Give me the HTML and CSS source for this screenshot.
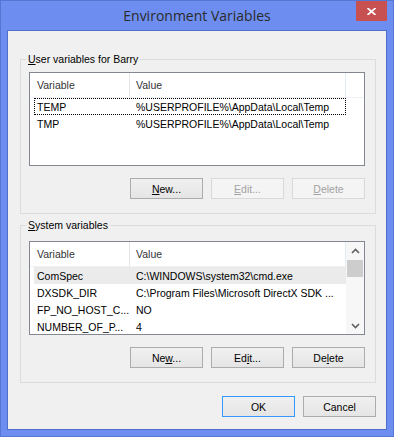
FILE: index.html
```html
<!DOCTYPE html>
<html lang="en">
<head>
    <meta charset="UTF-8">
    <title>Environment Variables</title>
    <link rel="stylesheet" href="styles.css">
</head>
<body>
    <div class="window">
        <div class="titlebar">
            <span></span>
            <span class="title">Environment Variables</span>
            <span class="close">
                <svg width="9" height="7" viewBox="0 0 9 7"><path d="M0.5 0 L8.5 7 M8.5 0 L0.5 7" stroke="#fff" stroke-width="1.7"/></svg>
            </span>
        </div>

        <div class="client">
            <fieldset class="group group-user">
                <legend><u>U</u>ser variables for Barry</legend>
                <div class="listview">
                    <div class="lv-main">
                        <div class="lv-header">
                            <span class="lv-col lv-col-name">Variable</span>
                            <span class="lv-col lv-col-value">Value</span>
                        </div>
                        <div class="lv-row lv-focus"><span>TEMP</span><span>%USERPROFILE%\AppData\Local\Temp</span></div>
                        <div class="lv-row"><span>TMP</span><span>%USERPROFILE%\AppData\Local\Temp</span></div>
                    </div>
                </div>
                <div class="buttons">
                    <button class="btn"><u>N</u>ew...</button>
                    <button class="btn" disabled><u>E</u>dit...</button>
                    <button class="btn" disabled><u>D</u>elete</button>
                </div>
            </fieldset>

            <fieldset class="group group-system">
                <legend><u>S</u>ystem variables</legend>
                <div class="listview">
                    <div class="lv-main lv-main-scroll">
                        <div class="lv-header">
                            <span class="lv-col lv-col-name">Variable</span>
                            <span class="lv-col lv-col-value">Value</span>
                        </div>
                        <div class="lv-row lv-hot"><span>ComSpec</span><span>C:\WINDOWS\system32\cmd.exe</span></div>
                        <div class="lv-row"><span>DXSDK_DIR</span><span>C:\Program Files\Microsoft DirectX SDK ...</span></div>
                        <div class="lv-row"><span>FP_NO_HOST_C...</span><span>NO</span></div>
                        <div class="lv-row"><span>NUMBER_OF_P...</span><span>4</span></div>
                    </div>
                    <div class="scrollbar">
                        <span class="sb-arrow">
                            <svg width="9" height="6" viewBox="0 0 9 6"><path d="M1 5 L4.5 1.5 L8 5" fill="none" stroke="#606060" stroke-width="1.6"/></svg>
                        </span>
                        <span class="sb-thumb"></span>
                        <span class="sb-track"></span>
                        <span class="sb-arrow">
                            <svg width="9" height="6" viewBox="0 0 9 6"><path d="M1 1 L4.5 4.5 L8 1" fill="none" stroke="#606060" stroke-width="1.6"/></svg>
                        </span>
                    </div>
                </div>
                <div class="buttons">
                    <button class="btn">Ne<u>w</u>...</button>
                    <button class="btn">Ed<u>i</u>t...</button>
                    <button class="btn">De<u>l</u>ete</button>
                </div>
            </fieldset>

            <div class="dialog-buttons">
                <button class="btn btn-default">OK</button>
                <button class="btn">Cancel</button>
            </div>
        </div>
    </div>
</body>
</html>
```

FILE: styles.css
```css
body {
    margin: 0;
    font-family: "Liberation Sans", Arial, sans-serif;
    font-size: 10.5px;
    color: #000;
}

.window {
    width: 394px;
    height: 437px;
    box-sizing: border-box;
    border: 1px solid #5676d3;
    background: #6d8ef0;
    padding: 0 6px 6px;
    display: flex;
    flex-direction: column;
}

.titlebar {
    height: 29px;
    display: grid;
    grid-template-columns: 1fr auto 1fr;
}

.title {
    font-family: "Open Sans", "Noto Sans", sans-serif;
    font-size: 14px;
    line-height: 30px;
    color: #2b2b2b;
}

.close {
    justify-self: end;
    width: 31px;
    height: 20px;
    background: #c75050;
    display: flex;
    align-items: center;
    justify-content: center;
}

.client {
    flex: 1;
    border: 1px solid #4f6fcb;
    background: #f0f0f0;
    display: flex;
    flex-direction: column;
}

/* group boxes */
.group {
    margin: 0 10px 0 12px;
    padding: 0 10px 14px 8px;
    border: 1px solid #dcdcdc;
    min-width: 0;
}

.group legend {
    margin-left: -3px;
    padding: 0 2px;
    line-height: 13px;
}

.group-user {
    margin-top: 22px;
    padding-top: 6px;
}

.group-system {
    margin-top: 5px;
    padding-top: 9px;
}

/* list view */
.listview {
    height: 94px;
    box-sizing: border-box;
    border: 1px solid #828790;
    background: #fff;
    display: flex;
}

.lv-main {
    flex: 1;
}

.lv-main-scroll {
    flex: none;
    width: 316px;
}

.lv-header {
    display: flex;
    height: 24px;
    line-height: 24px;
    color: #333;
    border-bottom: 1px solid #eef2f7;
}

.lv-col {
    box-sizing: border-box;
}

.lv-col-name {
    width: 100px;
    padding-left: 7px;
    border-right: 1px solid #e5e5e5;
}

.lv-col-value {
    width: 216px;
    padding-left: 6px;
    border-right: 1px solid #e3ebf5;
}

.lv-row {
    display: grid;
    grid-template-columns: 99px 1fr;
    margin-left: 4px;
    width: 312px;
    height: 17px;
    line-height: 17px;
    box-sizing: border-box;
    border: 1px dotted transparent;
    padding-left: 2px;
    white-space: nowrap;
}

.lv-focus {
    border-color: #000;
}

.lv-hot {
    background: #ebebeb;
}

/* scroll bar */
.scrollbar {
    width: 18px;
    background: #f7f7f7;
    display: flex;
    flex-direction: column;
}

.sb-arrow {
    height: 17px;
    display: flex;
    align-items: center;
    justify-content: center;
}

.sb-thumb {
    height: 17px;
    margin: 1px 1px 0 1px;
    background: #cdcdcd;
}

.sb-track {
    flex: 1;
}

/* buttons */
.buttons {
    display: flex;
    justify-content: flex-end;
    gap: 8px;
    margin-top: 12px;
}

.btn {
    width: 73px;
    height: 21px;
    padding: 0;
    border: 1px solid #acacac;
    background: linear-gradient(#f0f0f0, #e5e5e5);
    font: inherit;
    color: #000;
}

.btn:disabled {
    border-color: #d9d9d9;
    background: #f4f4f4;
    color: #a3a3a3;
}

.btn-default {
    border-color: #3399ff;
}

.dialog-buttons {
    display: flex;
    justify-content: flex-end;
    gap: 8px;
    margin: 13px 10px 0 0;
}
```
